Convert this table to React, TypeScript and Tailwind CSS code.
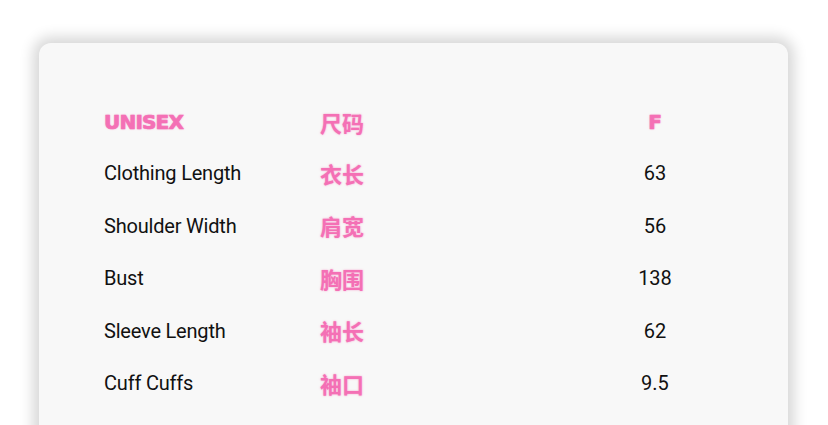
import React from "react";

const rows = [
  ["Clothing Length", "衣长", "63"],
  ["Shoulder Width", "肩宽", "56"],
  ["Bust", "胸围", "138"],
  ["Sleeve Length", "袖长", "62"],
  ["Cuff Cuffs", "袖口", "9.5"],
];

export default function App() {
  return (
    <div className="w-[828px] h-[425px] overflow-hidden bg-white pt-[43px] pl-[39px]">
      <div className="w-[749px] h-[440px] rounded-[12px] bg-[#f8f8f8] shadow-[0_0_14px_6px_rgba(0,0,0,0.16)] pt-[54px] pl-[65px]">
        <div className="grid grid-cols-[216px_230px_210px]">
          <div className="h-[50px] flex items-center text-[20px] font-bold text-[#f470b5] [font-family:'DejaVu_Sans',sans-serif] tracking-[-0.8px] [-webkit-text-stroke:0.7px_#f470b5] [text-shadow:0_0_2px_rgba(244,112,181,0.7)]">
            UNISEX
          </div>
          <div className="h-[50px] flex items-center text-[22px] font-bold text-[#f470b5] [font-family:'Noto_Sans_CJK_SC',sans-serif] [text-shadow:0_0_2px_rgba(244,112,181,0.7)]">
            尺码
          </div>
          <div className="h-[50px] flex items-center justify-center text-[20px] font-bold text-[#f470b5] [font-family:'DejaVu_Sans',sans-serif] [-webkit-text-stroke:0.7px_#f470b5] [text-shadow:0_0_2px_rgba(244,112,181,0.7)]">
            F
          </div>
          {rows.map(([en, zh, v]) => (
            <React.Fragment key={en}>
              <div className="h-[52.5px] flex items-center text-[20px] text-[#111111] [font-family:Roboto,sans-serif] tracking-[-0.2px]">
                {en}
              </div>
              <div className="h-[52.5px] flex items-center text-[22px] font-bold text-[#f470b5] [font-family:'Noto_Sans_CJK_SC',sans-serif] [text-shadow:0_0_2px_rgba(244,112,181,0.7)]">
                {zh}
              </div>
              <div className="h-[52.5px] flex items-center justify-center text-[20px] text-[#111111] [font-family:Roboto,sans-serif]">
                {v}
              </div>
            </React.Fragment>
          ))}
        </div>
      </div>
    </div>
  );
}
